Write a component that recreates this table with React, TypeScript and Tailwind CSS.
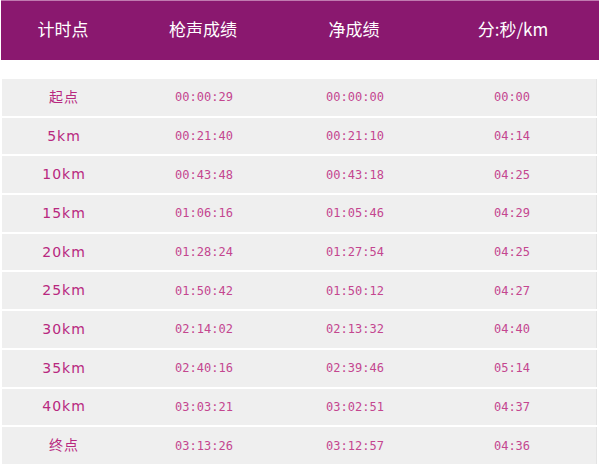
const rows = [
  { point: "起点", gun: "00:00:29", net: "00:00:00", pace: "00:00" },
  { point: "5km", gun: "00:21:40", net: "00:21:10", pace: "04:14" },
  { point: "10km", gun: "00:43:48", net: "00:43:18", pace: "04:25" },
  { point: "15km", gun: "01:06:16", net: "01:05:46", pace: "04:29" },
  { point: "20km", gun: "01:28:24", net: "01:27:54", pace: "04:25" },
  { point: "25km", gun: "01:50:42", net: "01:50:12", pace: "04:27" },
  { point: "30km", gun: "02:14:02", net: "02:13:32", pace: "04:40" },
  { point: "35km", gun: "02:40:16", net: "02:39:46", pace: "05:14" },
  { point: "40km", gun: "03:03:21", net: "03:02:51", pace: "04:37" },
  { point: "终点", gun: "03:13:26", net: "03:12:57", pace: "04:36" },
]

const cols = "grid grid-cols-[124px_156px_146px_1fr] items-center text-center"
const time = "text-[12px] text-[#c4468f] font-['DejaVu_Sans_Mono',monospace]"

export default function App() {
  return (
    <div className="w-[600px] h-[465px] overflow-hidden bg-white">
      {/* Header */}
      <div
        className={`${cols} mx-px h-[60px] pb-[3px] bg-[#8a186f] border-t border-[#c07ab0] text-white text-[17px] font-['Noto_Sans_CJK_SC','Noto_Sans',sans-serif]`}
      >
        <div>计时点</div>
        <div>枪声成绩</div>
        <div>净成绩</div>
        <div>分:秒/km</div>
      </div>

      {/* Rows */}
      <div className="mt-[19px] ml-[2px] mr-[3px] flex flex-col gap-[2px]">
        {rows.map((r) => (
          <div key={r.point} className={`${cols} h-[36.7px] bg-[#efefef] border-r border-[#e4e4e4]`}>
            <div className="text-[14px] tracking-[1px] text-[#b8287f] font-['DejaVu_Sans','Noto_Sans_CJK_SC',sans-serif]">
              {r.point}
            </div>
            <div className={time}>{r.gun}</div>
            <div className={time}>{r.net}</div>
            <div className={time}>{r.pace}</div>
          </div>
        ))}
      </div>
    </div>
  )
}
